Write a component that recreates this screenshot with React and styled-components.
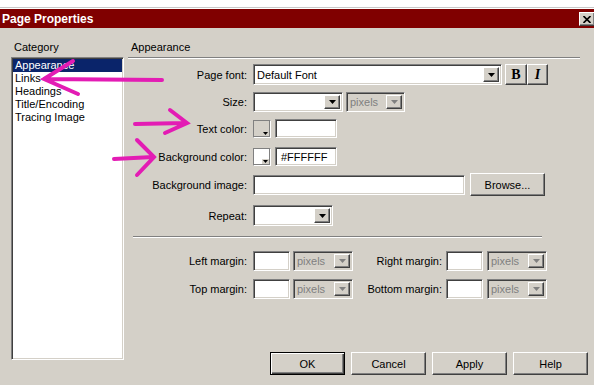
import React from "react";
import styled, { createGlobalStyle, css } from "styled-components";

const GlobalStyle = createGlobalStyle`
  html, body {
    margin: 0;
    padding: 0;
    background: #fff;
  }
  body {
    font-family: "Liberation Sans", Arial, sans-serif;
    font-size: 11px;
    color: #000;
  }
`;

const face = "#d4d0c8";

const raised = css`
  border: 1px solid;
  border-color: #fff #404040 #404040 #fff;
  box-shadow: inset -1px -1px 0 #808080;
  background: ${face};
`;

const sunken = css`
  border: 1px solid;
  border-color: #808080 #fff #fff #808080;
  box-shadow: inset 1px 1px 0 #404040, inset -1px -1px 0 ${face};
`;

const Window = styled.div`
  position: relative;
  width: 594px;
  height: 385px;
  display: flex;
  flex-direction: column;
  overflow: hidden;
  background: #fff;
`;

const TopStrip = styled.div`
  height: 7px;
  border-bottom: 1px solid #c8c8c8;
  margin-bottom: 1px;
  flex-shrink: 0;
`;

const TitleBar = styled.div`
  height: 19px;
  flex-shrink: 0;
  background: #800000;
  display: flex;
  align-items: center;
  justify-content: space-between;
  padding-left: 2px;
  color: #fff;
  font-weight: bold;
  font-size: 12px;
`;

const CloseButton = styled.div`
  ${raised};
  box-sizing: border-box;
  width: 16px;
  height: 14px;
  margin-right: -1px;
  margin-top: 1px;
  display: flex;
  align-items: center;
  justify-content: center;
`;

const Body = styled.div`
  flex: 1;
  background: ${face};
  display: flex;
`;

const LeftCol = styled.div`
  padding: 13px 0 0 11px;
  display: flex;
  flex-direction: column;
`;

const Caption = styled.div`
  line-height: 13px;
  padding-left: ${(p) => p.$indent || 0}px;
`;

const ListBox = styled.div`
  ${sunken};
  box-sizing: border-box;
  margin-top: 3px;
  width: 113px;
  height: 303px;
  background: #fff;
  padding: 1px;
`;

const ListItem = styled.div`
  height: 13px;
  line-height: 13px;
  padding-left: 2px;
  white-space: nowrap;
  background: ${(p) => (p.$selected ? "#0a246a" : "transparent")};
  color: ${(p) => (p.$selected ? "#fff" : "#000")};
`;

const RightCol = styled.div`
  flex: 1;
  margin-left: 5px;
  padding-top: 13px;
  display: flex;
  flex-direction: column;
`;

const Rule = styled.div`
  height: 0;
  border-top: 1px solid #808080;
  border-bottom: 1px solid #fff;
  width: ${(p) => p.$w}px;
  margin-top: ${(p) => p.$mt}px;
  margin-left: ${(p) => p.$ml || 0}px;
`;

const Row = styled.div`
  display: flex;
  align-items: center;
  height: ${(p) => p.$h}px;
  margin-top: ${(p) => p.$mt}px;
`;

const Label = styled.div`
  flex-shrink: 0;
  width: ${(p) => p.$w || 118}px;
  margin-right: ${(p) => p.$gap || 6}px;
  text-align: right;
  white-space: nowrap;
`;

const Field = styled.div`
  ${sunken};
  box-sizing: border-box;
  flex-shrink: 0;
  width: ${(p) => p.$w}px;
  height: ${(p) => p.$h || 20}px;
  margin-right: ${(p) => p.$gap || 0}px;
  padding: 2px 2px 2px 5px;
  display: flex;
  align-items: center;
  justify-content: space-between;
  background: ${(p) => (p.$disabled ? face : "#fff")};
  color: ${(p) => (p.$disabled ? "#808080" : "#000")};
  white-space: nowrap;
`;

const DropButton = styled.div`
  ${raised};
  box-sizing: border-box;
  width: 16px;
  height: 100%;
  flex-shrink: 0;
  display: flex;
  align-items: center;
  justify-content: center;
`;

const StyleButton = styled.div`
  ${raised};
  box-sizing: border-box;
  width: ${(p) => p.$w}px;
  height: 21px;
  display: flex;
  align-items: center;
  justify-content: center;
  font-family: "Liberation Serif", "Times New Roman", serif;
  font-size: 14px;
  font-weight: bold;
  font-style: ${(p) => (p.$italic ? "italic" : "normal")};
`;

const Swatch = styled.div`
  position: relative;
  box-sizing: border-box;
  flex-shrink: 0;
  width: 18px;
  height: 18px;
  margin-right: 4px;
  border: 1px solid;
  border-color: #808080 #fff #fff #808080;
  box-shadow: inset -1px -1px 0 #808080;
  background: ${(p) => p.$color};
`;

const SwatchArrow = styled.div`
  position: absolute;
  right: 1px;
  bottom: 1px;
  width: 7px;
  height: 5px;
  background: ${face};
  display: flex;
  align-items: center;
  justify-content: center;
`;

const PushButton = styled.div`
  ${raised};
  box-sizing: border-box;
  width: ${(p) => p.$w || 75}px;
  height: 23px;
  margin-left: ${(p) => p.$ml || 0}px;
  display: flex;
  align-items: center;
  justify-content: center;
  ${(p) =>
    p.$default &&
    css`
      border-color: #000;
      box-shadow: inset 1px 1px 0 #fff, inset -1px -1px 0 #404040,
        inset -2px -2px 0 #808080;
    `}
`;

const ButtonRow = styled.div`
  margin-top: auto;
  margin-bottom: 10px;
  padding-right: 6px;
  display: flex;
  justify-content: flex-end;
  gap: 6px;
`;

const Annotations = styled.svg`
  position: absolute;
  left: 0;
  top: 0;
  pointer-events: none;
`;

const Arrow = ({ disabled }) => (
  <svg width="7" height="4" viewBox="0 0 7 4">
    <polygon points="0,0 7,0 3.5,4" fill={disabled ? "#808080" : "#000"} />
  </svg>
);

const Select = ({ w, h, text, disabled, gap }) => (
  <Field $w={w} $h={h} $disabled={disabled} $gap={gap} style={{ paddingLeft: text ? 3 : 2 }}>
    <span>{text}</span>
    <DropButton>
      <Arrow disabled={disabled} />
    </DropButton>
  </Field>
);

const ColorPick = ({ color, value }) => (
  <>
    <Swatch $color={color}>
      <SwatchArrow>
        <svg width="5" height="3" viewBox="0 0 5 3">
          <polygon points="0,0 5,0 2.5,3" fill="#000" />
        </svg>
      </SwatchArrow>
    </Swatch>
    <Field $w={62} $h={19}>
      {value}
    </Field>
  </>
);

const categories = ["Appearance", "Links", "Headings", "Title/Encoding", "Tracing Image"];

const pink = "#e31cb4";

export default function App() {
  return (
    <Window>
      <GlobalStyle />
      <TopStrip />
      <TitleBar>
        <span>Page Properties</span>
        <CloseButton>
          <svg width="8" height="7" viewBox="0 0 8 7">
            <path d="M0.5 0 L7.5 7 M7.5 0 L0.5 7" stroke="#000" strokeWidth="1.6" />
          </svg>
        </CloseButton>
      </TitleBar>
      <Body>
        <LeftCol>
          <Caption $indent={3}>Category</Caption>
          <ListBox>
            {categories.map((c, i) => (
              <ListItem key={c} $selected={i === 0}>
                {c}
              </ListItem>
            ))}
          </ListBox>
        </LeftCol>
        <RightCol>
          <Caption $indent={2}>Appearance</Caption>
          <Rule $w={452} $mt={3} $ml={-1} />

          <Row $h={21} $mt={5}>
            <Label>Page font:</Label>
            <Select w={249} h={21} text="Default Font" gap={3} />
            <StyleButton $w={22}>B</StyleButton>
            <StyleButton $w={21} $italic>
              I
            </StyleButton>
          </Row>

          <Row $h={20} $mt={7}>
            <Label>Size:</Label>
            <Select w={90} h={20} gap={3} />
            <Select w={59} h={20} text="pixels" disabled />
          </Row>

          <Row $h={19} $mt={7}>
            <Label>Text color:</Label>
            <ColorPick color={face} />
          </Row>

          <Row $h={19} $mt={9}>
            <Label>Background color:</Label>
            <ColorPick color="#fff" value="#FFFFFF" />
          </Row>

          <Row $h={23} $mt={7}>
            <Label>Background image:</Label>
            <Field $w={212} $h={20} $gap={5} />
            <PushButton>Browse...</PushButton>
          </Row>

          <Row $h={21} $mt={9}>
            <Label>Repeat:</Label>
            <Select w={80} h={21} />
          </Row>

          <Rule $w={409} $mt={10} $ml={4} />

          <Row $h={20} $mt={13}>
            <Label>Left margin:</Label>
            <Field $w={37} $h={20} $gap={3} />
            <Select w={60} h={20} text="pixels" disabled />
            <Label $w={89} $gap={4}>
              Right margin:
            </Label>
            <Field $w={37} $h={20} $gap={4} />
            <Select w={60} h={20} text="pixels" disabled />
          </Row>

          <Row $h={20} $mt={8}>
            <Label>Top margin:</Label>
            <Field $w={37} $h={20} $gap={3} />
            <Select w={60} h={20} text="pixels" disabled />
            <Label $w={89} $gap={4}>
              Bottom margin:
            </Label>
            <Field $w={37} $h={20} $gap={4} />
            <Select w={60} h={20} text="pixels" disabled />
          </Row>

          <ButtonRow>
            <PushButton $default>OK</PushButton>
            <PushButton>Cancel</PushButton>
            <PushButton>Apply</PushButton>
            <PushButton>Help</PushButton>
          </ButtonRow>
        </RightCol>
      </Body>

      <Annotations width="594" height="385" viewBox="0 0 594 385">
        <g stroke={pink} strokeWidth="4" strokeLinecap="round" fill="none">
          <path d="M162 80 L44 79 M73 61 L44 79 L78 94" />
          <path d="M135 124 L186 123 M170 110 L187 123 L165 133" />
          <path d="M114 159 L153 157 M137 140 L154 157 L137 175" />
        </g>
      </Annotations>
    </Window>
  );
}
